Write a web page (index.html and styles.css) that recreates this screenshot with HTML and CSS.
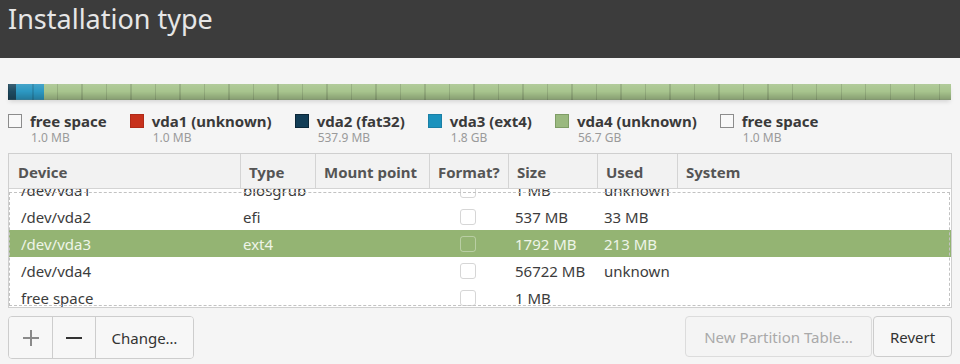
FILE: index.html
```html
<!DOCTYPE html>
<html lang="en">
<head>
  <meta charset="UTF-8">
  <title>Installation type</title>
  <link rel="stylesheet" href="styles.css">
</head>
<body>
  <header class="titlebar">
    <h1>Installation type</h1>
  </header>

  <main class="content">
    <!-- Disk usage bar -->
    <div class="disk-bar">
      <div class="seg seg-free1"></div>
      <div class="seg seg-vda1"></div>
      <div class="seg seg-vda2"></div>
      <div class="seg seg-vda3"></div>
      <div class="seg seg-vda4"></div>
      <div class="seg seg-free2"></div>
    </div>

    <ul class="legend">
      <li class="legend-item">
        <span class="swatch swatch-free"></span>
        <div><div class="legend-name">free space</div><div class="legend-size">1.0 MB</div></div>
      </li>
      <li class="legend-item">
        <span class="swatch swatch-vda1"></span>
        <div><div class="legend-name">vda1 (unknown)</div><div class="legend-size">1.0 MB</div></div>
      </li>
      <li class="legend-item">
        <span class="swatch swatch-vda2"></span>
        <div><div class="legend-name">vda2 (fat32)</div><div class="legend-size">537.9 MB</div></div>
      </li>
      <li class="legend-item">
        <span class="swatch swatch-vda3"></span>
        <div><div class="legend-name">vda3 (ext4)</div><div class="legend-size">1.8 GB</div></div>
      </li>
      <li class="legend-item">
        <span class="swatch swatch-vda4"></span>
        <div><div class="legend-name">vda4 (unknown)</div><div class="legend-size">56.7 GB</div></div>
      </li>
      <li class="legend-item">
        <span class="swatch swatch-free"></span>
        <div><div class="legend-name">free space</div><div class="legend-size">1.0 MB</div></div>
      </li>
    </ul>

    <!-- Partition list -->
    <div class="partitions">
      <div class="row head">
        <div class="cell c-dev">Device</div>
        <div class="cell c-type">Type</div>
        <div class="cell c-mount">Mount point</div>
        <div class="cell c-fmt">Format?</div>
        <div class="cell c-size">Size</div>
        <div class="cell c-used">Used</div>
        <div class="cell c-sys">System</div>
      </div>
      <div class="list">
        <div class="list-rows">
          <div class="row">
            <div class="cell c-dev">/dev/vda1</div>
            <div class="cell c-type">biosgrub</div>
            <div class="cell c-mount"></div>
            <div class="cell c-fmt"><span class="check"></span></div>
            <div class="cell c-size">1 MB</div>
            <div class="cell c-used">unknown</div>
            <div class="cell c-sys"></div>
          </div>
          <div class="row">
            <div class="cell c-dev">/dev/vda2</div>
            <div class="cell c-type">efi</div>
            <div class="cell c-mount"></div>
            <div class="cell c-fmt"><span class="check"></span></div>
            <div class="cell c-size">537 MB</div>
            <div class="cell c-used">33 MB</div>
            <div class="cell c-sys"></div>
          </div>
          <div class="row selected">
            <div class="cell c-dev">/dev/vda3</div>
            <div class="cell c-type">ext4</div>
            <div class="cell c-mount"></div>
            <div class="cell c-fmt"><span class="check"></span></div>
            <div class="cell c-size">1792 MB</div>
            <div class="cell c-used">213 MB</div>
            <div class="cell c-sys"></div>
          </div>
          <div class="row">
            <div class="cell c-dev">/dev/vda4</div>
            <div class="cell c-type"></div>
            <div class="cell c-mount"></div>
            <div class="cell c-fmt"><span class="check"></span></div>
            <div class="cell c-size">56722 MB</div>
            <div class="cell c-used">unknown</div>
            <div class="cell c-sys"></div>
          </div>
          <div class="row">
            <div class="cell c-dev">free space</div>
            <div class="cell c-type"></div>
            <div class="cell c-mount"></div>
            <div class="cell c-fmt"><span class="check"></span></div>
            <div class="cell c-size">1 MB</div>
            <div class="cell c-used"></div>
            <div class="cell c-sys"></div>
          </div>
        </div>
        <div class="drop-outline"></div>
      </div>
    </div>

    <!-- Buttons -->
    <div class="actions">
      <div class="btn-group">
        <button class="btn btn-icon" title="Add">
          <svg width="18" height="18" viewBox="0 0 18 18"><path d="M9 1v16M1 9h16" stroke="#8a8a8a" stroke-width="2" fill="none"/></svg>
        </button>
        <button class="btn btn-icon" title="Remove">
          <svg width="18" height="18" viewBox="0 0 18 18"><path d="M1 9h16" stroke="#333" stroke-width="2" fill="none"/></svg>
        </button>
        <button class="btn btn-change">Change…</button>
      </div>
      <div class="btn-right">
        <button class="btn btn-disabled">New Partition Table…</button>
        <button class="btn btn-revert">Revert</button>
      </div>
    </div>
  </main>
</body>
</html>
```

FILE: styles.css
```css
body {
  margin: 0;
  background: #f5f5f5;
  font-family: 'Noto Sans', sans-serif;
  color: #3c3c3c;
}

/* Dark title strip */
.titlebar {
  background: #3c3c3c;
  height: 58px;
  padding: 0 8px;
}

.titlebar h1 {
  margin: 0;
  color: #e6e6e6;
  font-weight: 400;
  font-size: 27px;
  line-height: 37px;
}

.content {
  padding: 26px 8px 0 8px;
}

/* Disk bar */
.disk-bar {
  display: flex;
  height: 16px;
  margin-right: 1px;
  box-shadow: 0 3px 4px -1px rgba(0, 0, 0, 0.12);
  position: relative;
}

.disk-bar::after {
  content: "";
  position: absolute;
  inset: 0;
  background:
    repeating-linear-gradient(90deg, rgba(0,0,0,0.12) 0 1px, transparent 1px 24.5px),
    linear-gradient(rgba(255,255,255,0.12), rgba(0,0,0,0) 50%, rgba(0,0,0,0.18));
  border-bottom: 1px solid rgba(0,0,0,0.25);
  box-sizing: border-box;
}

.seg { height: 100%; }
.seg-free1 { width: 1px; background: #1e4a60; }
.seg-vda1 { width: 1px; background: #1e4a60; }
.seg-vda2 { width: 6px; background: #1e4a60; }
.seg-vda3 { width: 28px; background: #2c98c2; }
.seg-vda4 { flex: 1; background: #a7c48d; }
.seg-free2 { width: 1px; background: #a7c48d; }

/* Legend */
.legend {
  list-style: none;
  margin: 12px 0 0 0;
  padding: 0;
  display: flex;
  gap: 23px;
}

.legend-item {
  display: flex;
  gap: 8px;
}

.swatch {
  width: 14px;
  height: 14px;
  margin-top: 2px;
  box-sizing: border-box;
  border: 1px solid rgba(0,0,0,0.35);
}

.swatch-free { background: #f8f8f8; border-color: #8c8c8c; }
.swatch-vda1 { background: #c7311c; border-color: #b02a18; }
.swatch-vda2 { background: #123d56; }
.swatch-vda3 { background: #1b92bd; border-color: #1a7fa5; }
.swatch-vda4 { background: #9ab97f; border-color: #7f9d66; }

.legend-name {
  font-weight: 700;
  font-size: 15px;
  line-height: 19px;
  color: #3a3a3a;
}

.legend-size {
  font-size: 12px;
  line-height: 14px;
  color: #9a9a9a;
  padding-left: 1px;
}

/* Partition table */
.partitions {
  margin-top: 8px;
  border: 1px solid #cfcfcf;
  background: #fff;
}

.row {
  display: flex;
  height: 27px;
  align-items: center;
  font-size: 15px;
}

.row.head {
  height: 34px;
  background: #f2f2f2;
  border-bottom: 1px solid #d4d4d4;
  font-weight: 700;
  color: #555;
}

.cell {
  box-sizing: border-box;
  white-space: nowrap;
  overflow: hidden;
  padding-left: 12px;
}

.head .cell {
  height: 100%;
  line-height: 36px;
  border-right: 1px solid #d4d4d4;
  padding-left: 8px;
}

.head .c-sys { border-right: none; }

.c-dev { width: 232px; }
.c-type { width: 75px; padding-left: 2px; }
.c-mount { width: 114px; }
.c-fmt { width: 79px; display: flex; justify-content: center; padding-left: 0; padding-right: 3px; }
.c-size { width: 89px; padding-left: 6px; }
.c-used { width: 80px; padding-left: 6px; }
.c-sys { flex: 1; }

.head .c-dev { padding-left: 9px; }
.head .c-type, .head .c-mount, .head .c-fmt, .head .c-size, .head .c-used, .head .c-sys { padding-left: 8px; }
.head .c-fmt { display: block; }

.list {
  height: 118px;
  overflow: hidden;
  position: relative;
}

.list-rows {
  margin-top: -13px;
}

.list .c-dev { padding-left: 12px; }

.check {
  width: 16px;
  height: 16px;
  box-sizing: border-box;
  border: 1px solid #d6d6d6;
  border-radius: 3px;
  background: #fff;
}

.row.selected {
  background: #94b473;
  color: #eef4e8;
}

.row.selected .check {
  background: transparent;
  border-color: rgba(255,255,255,0.35);
}

.drop-outline {
  position: absolute;
  top: 3px;
  left: 0;
  right: 1px;
  bottom: 1px;
  border: 1px dashed #c2c2c2;
  pointer-events: none;
}

/* Bottom buttons */
.actions {
  display: flex;
  justify-content: space-between;
  margin-top: 8px;
}

.btn-group {
  display: flex;
  border: 1px solid #cdcdcd;
  border-radius: 4px;
  overflow: hidden;
}

.btn-right {
  display: flex;
  gap: 1px;
}

.btn {
  font-family: inherit;
  font-size: 15px;
  height: 41px;
  background: #f7f7f7;
  color: #333;
  border: none;
  padding: 0 10px;
  cursor: pointer;
}

.btn-group .btn + .btn {
  border-left: 1px solid #cdcdcd;
}

.btn-icon {
  width: 43px;
  padding: 0;
  display: flex;
  align-items: center;
  justify-content: center;
}

.btn-change { width: 98px; }

.btn-right .btn {
  border: 1px solid #cdcdcd;
  border-radius: 4px;
}

.btn-disabled {
  width: 187px;
  color: #a9a9a9;
  background: #f4f4f4;
  border-color: #dcdcdc !important;
}

.btn-revert { width: 79px; }
```
